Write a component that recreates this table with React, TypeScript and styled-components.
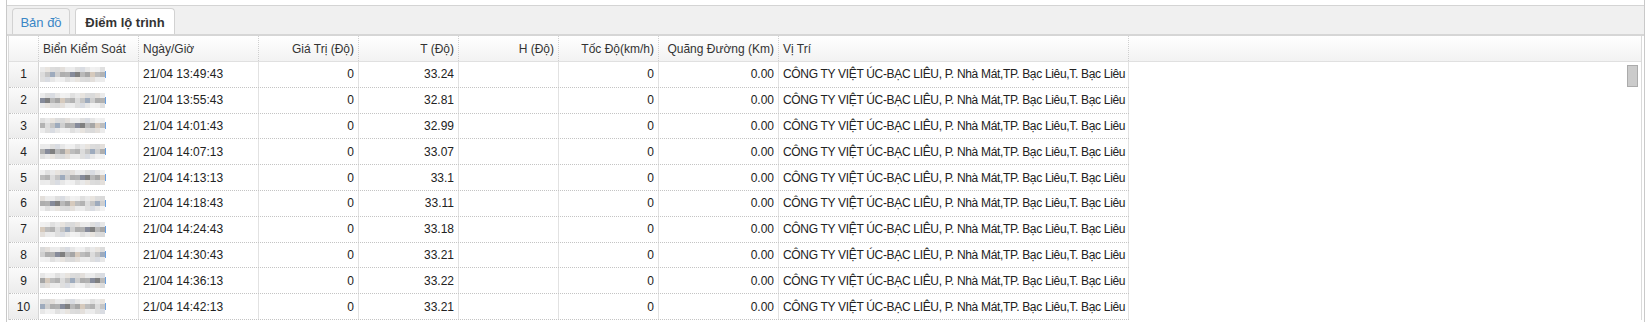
import React from 'react';
import styled, { createGlobalStyle } from 'styled-components';

const GlobalStyle = createGlobalStyle`
  html, body {
    margin: 0;
    padding: 0;
    background: #ffffff;
    overflow: hidden;
  }
  body {
    font-family: 'Liberation Sans', Arial, sans-serif;
    font-size: 12px;
    color: #222;
  }
`;

const Panel = styled.div`
  box-sizing: border-box;
  margin-left: 6px;
  width: 1639px;
  height: 322px;
  padding-top: 5px;
  border-left: 1px solid #c9c9c9;
  border-right: 1px solid #c9c9c9;
`;

const TabStrip = styled.div`
  box-sizing: border-box;
  height: 31px;
  display: flex;
  align-items: flex-end;
  gap: 5px;
  padding-left: 5px;
  background: #f0f0f0;
  border-top: 1px solid #d4d4d4;
  border-bottom: 2px solid #d6d6d6;
`;

const Tab = styled.div<{ $active?: boolean }>`
  box-sizing: border-box;
  height: 26px;
  width: ${p => (p.$active ? '100px' : '58px')};
  display: flex;
  align-items: center;
  justify-content: center;
  border: 1px solid #d2d2d2;
  border-bottom: none;
  border-radius: 4px 4px 0 0;
  background: ${p => (p.$active ? '#ffffff' : '#f3f3f3')};
  color: ${p => (p.$active ? '#333' : '#3a86c6')};
  font-weight: ${p => (p.$active ? 700 : 400)};
  font-size: 13px;
  padding-top: 1px;
`;

const Grid = styled.div`
  position: relative;
  margin: 0 2px 0 1px;
  border-left: 1px solid #dadada;
  border-right: 1px solid #dadada;
`;

const HeaderRow = styled.div`
  box-sizing: border-box;
  display: flex;
  height: 26px;
  background: linear-gradient(#ffffff, #f2f2f2);
  border-bottom: 1px solid #e0e0e0;
  color: #333;
`;

const HeaderCell = styled.div<{ $w?: number; $align?: string; $last?: boolean }>`
  box-sizing: border-box;
  ${p => (p.$w ? `width: ${p.$w}px; flex: none;` : 'flex: 1;')}
  display: flex;
  align-items: center;
  justify-content: ${p => (p.$align === 'right' ? 'flex-end' : p.$align === 'center' ? 'center' : 'flex-start')};
  padding: 0 4px;
  border-right: ${p => (p.$last ? 'none' : '1px dotted #cfcfcf')};
  white-space: nowrap;
`;

const Body = styled.div`
  position: relative;
`;

const Row = styled.div`
  box-sizing: border-box;
  display: flex;
  width: 1120px;
  height: 25.8px;
  border-bottom: 1px dotted #c4c4c4;
`;

const Cell = styled.div<{ $w: number; $align?: string; $tight?: boolean }>`
  box-sizing: border-box;
  width: ${p => p.$w}px;
  flex: none;
  display: flex;
  align-items: center;
  justify-content: ${p => (p.$align === 'right' ? 'flex-end' : p.$align === 'center' ? 'center' : 'flex-start')};
  padding: 0 4px;
  border-right: 1px solid #e2e2e2;
  white-space: nowrap;
  overflow: hidden;
  letter-spacing: ${p => (p.$tight ? '-0.32px' : 'normal')};
`;

const NumCell = styled(Cell)`
  background: linear-gradient(#fafafa, #ececec);
  border-right: 1px solid #d6d6d6;
  padding: 0;
`;

const ScrollThumb = styled.div`
  position: absolute;
  top: 3px;
  right: 3px;
  box-sizing: border-box;
  width: 11px;
  height: 22px;
  background: #cbcbcb;
  border: 1px solid #ababab;
`;

const columns = [
  { key: 'num', title: '', w: 30, align: 'center' },
  { key: 'plate', title: 'Biển Kiểm Soát', w: 100, align: 'left' },
  { key: 'time', title: 'Ngày/Giờ', w: 120, align: 'left' },
  { key: 'value', title: 'Giá Trị (Độ)', w: 100, align: 'right' },
  { key: 't', title: 'T (Độ)', w: 100, align: 'right' },
  { key: 'h', title: 'H (Độ)', w: 100, align: 'right' },
  { key: 'speed', title: 'Tốc Độ(km/h)', w: 100, align: 'right' },
  { key: 'dist', title: 'Quãng Đường (Km)', w: 120, align: 'right' },
  { key: 'pos', title: 'Vị Trí', w: 350, align: 'left' },
];

const ADDRESS = 'CÔNG TY VIỆT ÚC-BẠC LIÊU, P. Nhà Mát,TP. Bạc Liêu,T. Bạc Liêu';

const rows = [
  ['21/04 13:49:43', '33.24'],
  ['21/04 13:55:43', '32.81'],
  ['21/04 14:01:43', '32.99'],
  ['21/04 14:07:13', '33.07'],
  ['21/04 14:13:13', '33.1'],
  ['21/04 14:18:43', '33.11'],
  ['21/04 14:24:43', '33.18'],
  ['21/04 14:30:43', '33.21'],
  ['21/04 14:36:13', '33.22'],
  ['21/04 14:42:13', '33.21'],
];

// pixelated (censored) plate number
const MID = ['#cfcfcf', '#b2b2b2', '#808080', '#a6a6a6', '#bdbdbd', '#dcdcdc', '#9eabbd', '#aeaeae', '#878c9b', '#b9b9b9', '#d6cabd', '#b3b3b3', '#c5c5c5'];
const EDGE = ['#e9e9e9', '#dcdcdc', '#e3dfdb', '#ececec', '#d9dce2', '#f1f1f1', '#e0e0e0', '#e8e4df', '#dadada', '#ebebeb', '#dfdfdf', '#e7e7e7', '#efefef'];

const Mosaic: React.FC<{ seed: number }> = ({ seed }) => {
  const pick = (arr: string[], i: number, r: number) => arr[(i * 7 + seed * 3 + r * 5) % arr.length];
  return (
    <svg width="66" height="15" viewBox="0 0 66 15" style={{ display: 'block', marginLeft: -3 }}>
      {Array.from({ length: 13 }).map((_, i) => (
        <g key={i}>
          <rect x={i * 5} y={0} width={5} height={5} fill={pick(EDGE, i, 0)} />
          <rect x={i * 5} y={5} width={5} height={5} fill={pick(MID, i, 1)} />
          <rect x={i * 5} y={10} width={5} height={5} fill={pick(EDGE, i, 2)} />
        </g>
      ))}
      <rect x={65} y={4} width={1} height={7} fill="#6aa0e0" />
    </svg>
  );
};

export default function App() {
  return (
    <>
      <GlobalStyle />
      <Panel>
        <TabStrip>
          <Tab>Bản đồ</Tab>
          <Tab $active>Điểm lộ trình</Tab>
        </TabStrip>
        <Grid>
          <HeaderRow>
            {columns.map(c => (
              <HeaderCell key={c.key} $w={c.w} $align={c.align}>
                {c.title}
              </HeaderCell>
            ))}
            <HeaderCell $last />
          </HeaderRow>
          <Body>
            {rows.map(([time, t], i) => (
              <Row key={i}>
                <NumCell $w={30} $align="center">{i + 1}</NumCell>
                <Cell $w={100}>
                  <Mosaic seed={i} />
                </Cell>
                <Cell $w={120}>{time}</Cell>
                <Cell $w={100} $align="right">0</Cell>
                <Cell $w={100} $align="right">{t}</Cell>
                <Cell $w={100} $align="right" />
                <Cell $w={100} $align="right">0</Cell>
                <Cell $w={120} $align="right">0.00</Cell>
                <Cell $w={350} $tight>{ADDRESS}</Cell>
              </Row>
            ))}
            <ScrollThumb />
          </Body>
        </Grid>
      </Panel>
    </>
  );
}
